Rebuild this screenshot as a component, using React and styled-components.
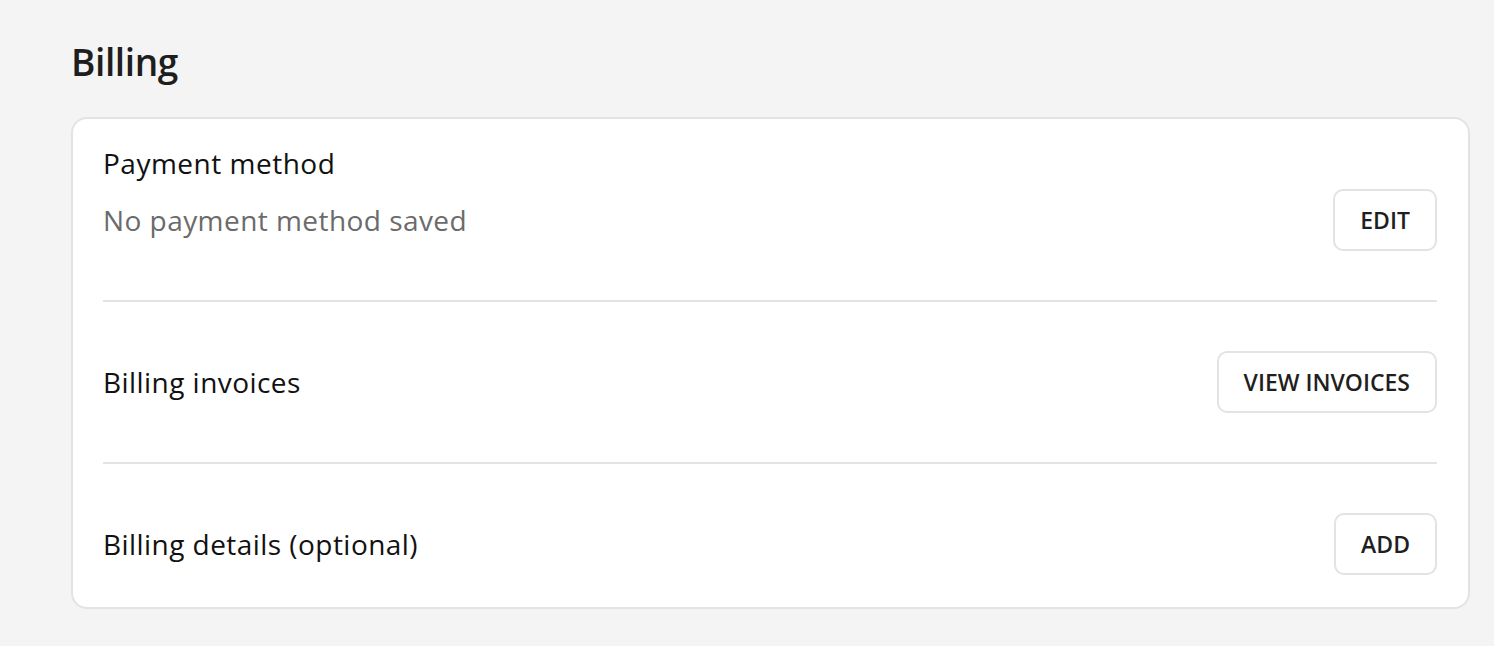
import React from 'react';
import styled, { createGlobalStyle } from 'styled-components';

const GlobalStyle = createGlobalStyle`
  body {
    margin: 0;
    background-color: #f4f4f4;
    font-family: "Open Sans", "Liberation Sans", sans-serif;
  }
`;

const Page = styled.div`
  padding: 39px 24px 37px 71px;
`;

const Heading = styled.h1`
  margin: 0 0 32px;
  font-size: 37px;
  line-height: 46px;
  font-weight: 600;
  color: #1e1e1e;
  letter-spacing: -0.4px;
`;

const Card = styled.div`
  background-color: #ffffff;
  border: 2px solid #e3e3e3;
  border-radius: 16px;
  padding: 26px 31px 32px 30px;
`;

const Section = styled.div`
  padding: ${({ $first }) => ($first ? '0' : '49px')} 0 ${({ $last }) => ($last ? '0' : '49px')};
  border-top: ${({ $first }) => ($first ? 'none' : '2px solid #e3e3e3')};
`;

const Title = styled.div`
  font-size: 28px;
  line-height: 36px;
  font-weight: 500;
  color: #111111;
  letter-spacing: 0.5px;
  margin-bottom: 8px;
`;

const Row = styled.div`
  display: flex;
  align-items: center;
  justify-content: space-between;
`;

const Label = styled.div`
  font-size: 28px;
  line-height: 36px;
  font-weight: ${({ $muted }) => ($muted ? 400 : 500)};
  color: ${({ $muted }) => ($muted ? '#6b6b6b' : '#111111')};
  letter-spacing: 0.45px;
`;

const Button = styled.button`
  height: 62px;
  padding: 0 25px;
  background-color: #ffffff;
  border: 2px solid #e3e3e3;
  border-radius: 10px;
  font-family: inherit;
  font-size: 23px;
  font-weight: 600;
  color: #1f1f1f;
  letter-spacing: 0;
  cursor: pointer;
`;

const App = () => (
  <>
    <GlobalStyle />
    <Page>
      <Heading>Billing</Heading>
      <Card>
        <Section $first>
          <Title>Payment method</Title>
          <Row>
            <Label $muted>No payment method saved</Label>
            <Button>EDIT</Button>
          </Row>
        </Section>
        <Section>
          <Row>
            <Label>Billing invoices</Label>
            <Button>VIEW INVOICES</Button>
          </Row>
        </Section>
        <Section $last>
          <Row>
            <Label>Billing details (optional)</Label>
            <Button>ADD</Button>
          </Row>
        </Section>
      </Card>
    </Page>
  </>
);

export default App;
